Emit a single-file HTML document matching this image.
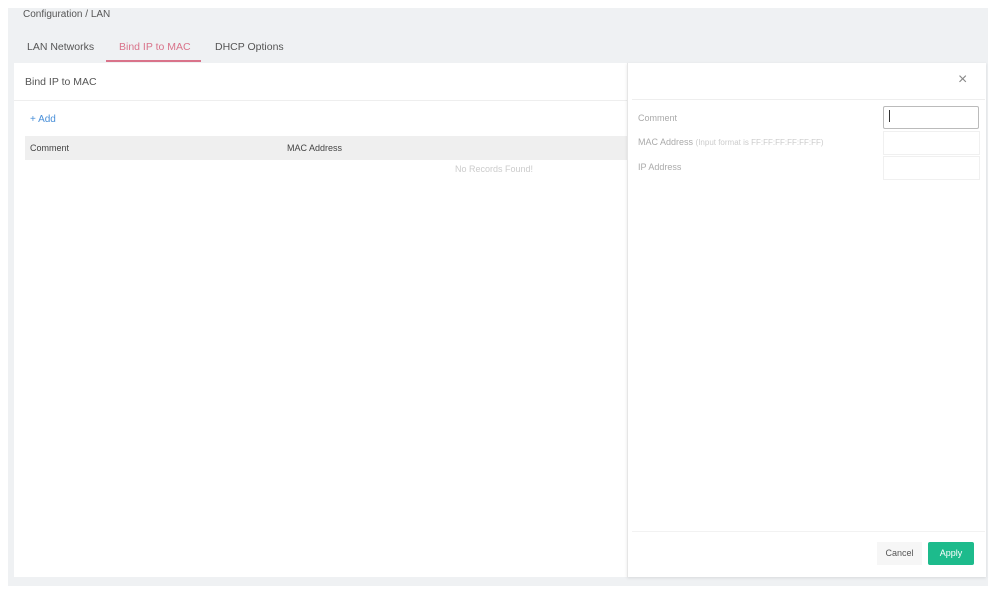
<!DOCTYPE html>
<html><head><style>
body{margin:0;width:995px;height:592px;background:#fff;font-family:"Liberation Sans",sans-serif;position:relative;overflow:hidden}
.bg{position:absolute;left:8px;top:8px;width:980px;height:578px;background:#eff1f3}
.a{position:absolute;white-space:nowrap}
</style></head><body>
<div class="bg"></div>
<div class="a" style="left:23px;top:9px;font-size:10px;color:#555">Configuration / LAN</div>
<div class="a" style="left:27px;top:41px;font-size:10.5px;color:#555">LAN Networks</div>
<div class="a" style="left:119px;top:41px;font-size:10.5px;color:#d9738a">Bind IP to MAC</div>
<div class="a" style="left:106px;top:60px;width:95px;height:2px;background:#d9738a"></div>
<div class="a" style="left:215px;top:41px;font-size:10.5px;color:#555">DHCP Options</div>
<div class="a" style="left:14px;top:63px;width:613px;height:514px;background:#fff"></div>
<div class="a" style="left:25px;top:76px;font-size:10.5px;color:#555">Bind IP to MAC</div>
<div class="a" style="left:14px;top:100px;width:613px;height:1px;background:#eee"></div>
<div class="a" style="left:30px;top:114px;font-size:10px;color:#4a90d9">+ Add</div>
<div class="a" style="left:25px;top:136px;width:602px;height:24px;background:#efefef"></div>
<div class="a" style="left:30px;top:143px;font-size:9px;color:#444">Comment</div>
<div class="a" style="left:287px;top:143px;font-size:9px;color:#444">MAC Address</div>
<div class="a" style="left:455px;top:164px;font-size:9px;color:#ccc">No Records Found!</div>
<div class="a" style="left:627px;top:63px;width:358px;height:514px;background:#fff;border-left:1px solid #e6e6e6;box-shadow:0 1px 3px rgba(0,0,0,.1)"></div>
<div class="a" style="left:958px;top:71px;font-size:16px;color:#888">×</div>
<div class="a" style="left:632px;top:99px;width:353px;height:1px;background:#eee"></div>
<div class="a" style="left:638px;top:113px;font-size:9px;color:#aaa">Comment</div>
<div class="a" style="left:638px;top:137px;font-size:9px;color:#aaa">MAC Address <span style="font-size:8px;color:#ccc">(Input format is FF:FF:FF:FF:FF:FF)</span></div>
<div class="a" style="left:638px;top:162px;font-size:9px;color:#aaa">IP Address</div>
<div class="a" style="left:883px;top:106px;width:94px;height:21px;border:1px solid #bbb;border-radius:2px"></div>
<div class="a" style="left:889px;top:110px;width:1px;height:12px;background:#333"></div>
<div class="a" style="left:883px;top:131px;width:95px;height:22px;border:1px solid #f0f0f0"></div>
<div class="a" style="left:883px;top:156px;width:95px;height:22px;border:1px solid #f0f0f0"></div>
<div class="a" style="left:632px;top:531px;width:353px;height:1px;background:#f2f2f2"></div>
<div class="a" style="left:877px;top:542px;width:45px;height:23px;background:#f6f6f6;font-size:9px;color:#555;text-align:center;line-height:23px">Cancel</div>
<div class="a" style="left:928px;top:542px;width:46px;height:23px;background:#1dbb8c;border-radius:2px;font-size:9px;color:#fff;text-align:center;line-height:23px">Apply</div>
</body></html>
